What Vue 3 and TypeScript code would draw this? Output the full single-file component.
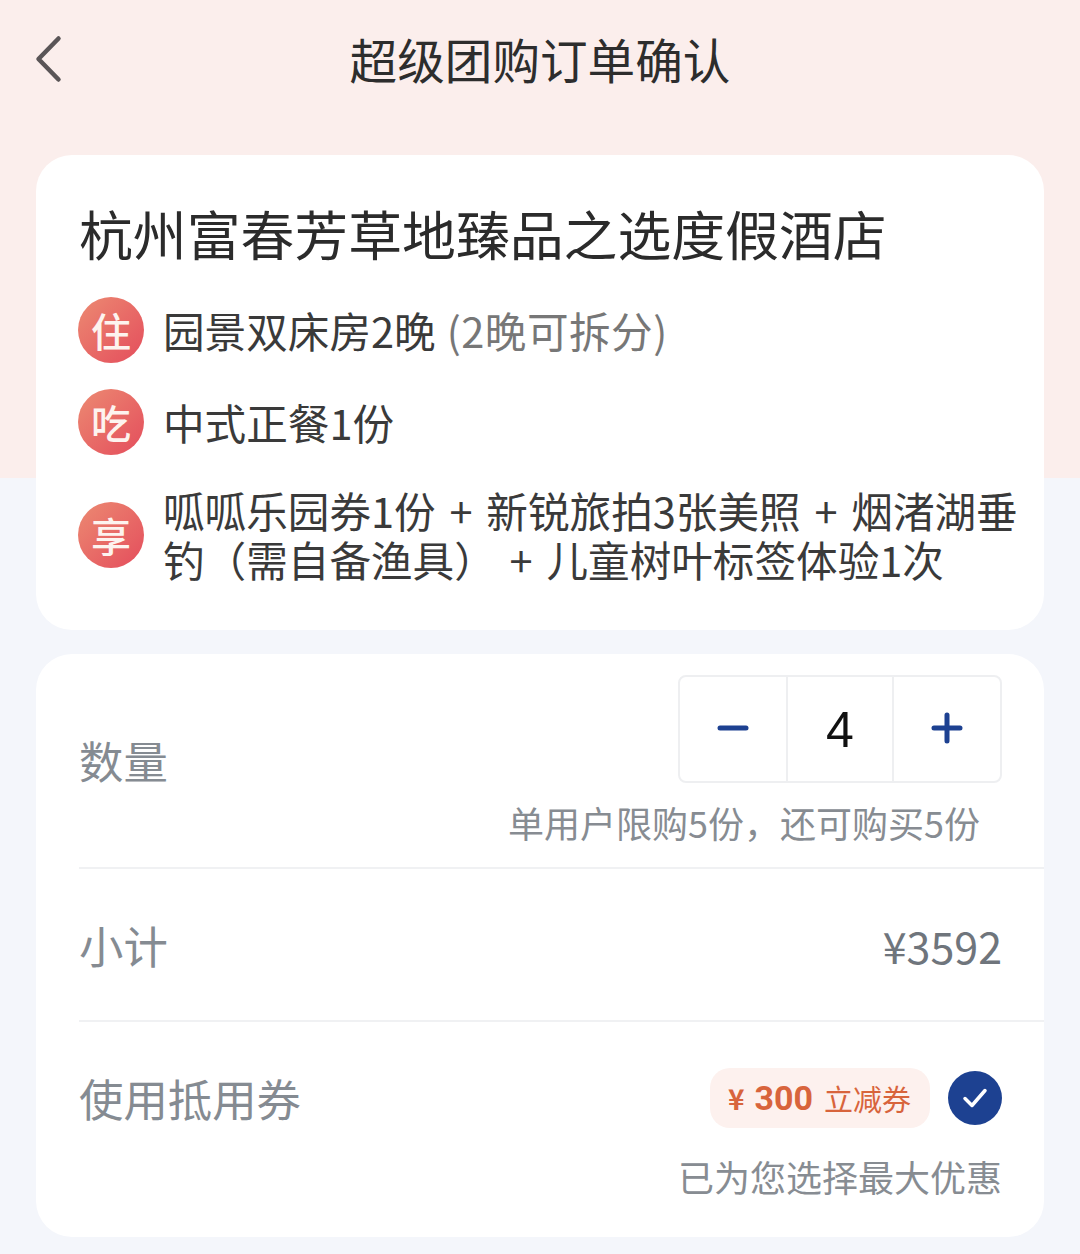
<template>
  <div class="page">
    <div class="page-bg"></div>

    <!-- Header -->
    <header class="nav">
      <svg class="back" width="28" height="48" viewBox="0 0 28 48" aria-label="返回">
        <path d="M24.500 3.500 L4.500 24 L24.500 44.500" fill="none" stroke="#5a5557" stroke-width="4.500" stroke-linecap="round" stroke-linejoin="round" />
      </svg>
      <h1 class="nav-title">超级团购订单确认</h1>
    </header>

    <!-- Hotel card -->
    <section class="card hotel">
      <h2 class="hotel-name">杭州富春芳草地臻品之选度假酒店</h2>
      <div v-for="item in items" :key="item.badge" class="item" :class="item.cls">
        <span class="badge">{{ item.badge }}</span>
        <p class="item-text">{{ item.text }}<span v-if="item.note" class="note">{{ item.note }}</span></p>
      </div>
    </section>

    <!-- Order card -->
    <section class="card order">
      <div class="row row-qty">
        <span class="label">数量</span>
        <div class="qty-col">
          <div class="stepper">
            <button class="step" type="button" aria-label="减少">
              <svg width="32" height="32" viewBox="0 0 32 32"><path d="M3 16H29" stroke="#1d4191" stroke-width="5" stroke-linecap="round" /></svg>
            </button>
            <span class="count">{{ count }}</span>
            <button class="step" type="button" aria-label="增加">
              <svg width="32" height="32" viewBox="0 0 32 32"><path d="M3 16H29M16 3V29" stroke="#1d4191" stroke-width="5" stroke-linecap="round" /></svg>
            </button>
          </div>
          <p class="hint limit">单用户限购5份，还可购买5份</p>
        </div>
      </div>

      <div class="row row-sub">
        <span class="label">小计</span>
        <span class="amount">¥{{ subtotal }}</span>
      </div>

      <div class="row row-coupon">
        <span class="label">使用抵用券</span>
        <div class="coupon-col">
          <div class="coupon-line">
            <div class="coupon">
              <span class="yen">¥</span>
              <span class="value">300</span>
              <span class="kind">立减券</span>
            </div>
            <span class="check">
              <svg width="26" height="24" viewBox="0 0 26 24"><path d="M3 12.500 L10 19.500 L23 4.500" fill="none" stroke="#fff" stroke-width="3.500" stroke-linecap="round" stroke-linejoin="round" /></svg>
            </span>
          </div>
          <p class="hint best">已为您选择最大优惠</p>
        </div>
      </div>
    </section>
  </div>
</template>

<script setup lang="ts">
import { computed, ref } from "vue";

interface PackageItem {
  badge: string;
  text: string;
  note?: string;
  cls: string;
}

const items: PackageItem[] = [
  { badge: "住", text: "园景双床房2晚", note: "(2晚可拆分)", cls: "item-stay" },
  { badge: "吃", text: "中式正餐1份", cls: "item-eat" },
  {
    badge: "享",
    text: "呱呱乐园券1份 + 新锐旅拍3张美照 + 烟渚湖垂钓（需自备渔具） + 儿童树叶标签体验1次",
    cls: "item-enjoy",
  },
];

const count = ref(4);
const subtotal = computed(() => count.value * 898);
</script>

<style>
html,
body {
  margin: 0;
  background: #f4f6fb;
}
</style>

<style scoped>
.page {
  position: relative;
  width: 1080px;
  height: 1254px;
  overflow: hidden;
  box-sizing: border-box;
  padding: 0 36px;
  background: #f4f6fb;
  font-family: "Noto Sans CJK SC", "Noto Sans", sans-serif;
  color: #333;
}

/* pink band behind the top of the first card */
.page-bg {
  position: absolute;
  left: 0;
  top: 0;
  width: 100%;
  height: 478px;
  background: #fbeeec;
}

.nav {
  position: relative;
  height: 155px;
  display: flex;
  justify-content: center;
}

.back {
  position: absolute;
  left: -2px;
  top: 35px;
}

.nav-title {
  margin: 28px 0 0;
  font-size: 47.600px;
  line-height: 62px;
  font-weight: 400;
  color: #2d2d2d;
}

.card {
  position: relative;
  background: #fff;
  border-radius: 36px;
}

/* Hotel card */
.hotel {
  height: 475px;
  box-sizing: border-box;
  padding: 41px 0 0 43px;
}

.hotel-name {
  margin: 0;
  font-size: 53.850px;
  line-height: 74px;
  font-weight: 400;
  white-space: nowrap;
  color: #2b2b2b;
}

.item {
  display: flex;
  align-items: center;
  gap: 19px;
  margin-left: -1px;
}

.item-stay {
  margin-top: 27px;
}

.item-eat {
  margin-top: 26px;
}

.item-enjoy {
  margin-top: 31px;
}

.badge {
  flex: none;
  width: 66px;
  height: 66px;
  border-radius: 50%;
  display: flex;
  align-items: center;
  justify-content: center;
  background: linear-gradient(135deg, #ec8a72, #e44d5c);
  color: #fdf3ef;
  font-size: 40px;
  font-weight: 500;
  line-height: 1;
}

.item-text {
  margin: 0;
  width: 860px;
  font-size: 41.600px;
  line-height: 49px;
  word-spacing: 4.500px;
  color: #3a3a3a;
}

.note {
  margin-left: 11px;
  letter-spacing: 0.500px;
  color: #777;
}

/* Order card */
.order {
  margin-top: 24px;
  height: 583px;
  box-sizing: border-box;
  padding-left: 43px;
}

.row {
  display: flex;
  justify-content: space-between;
  padding-right: 42px;
  border-bottom: 2px solid #f0f1f3;
}

.row-qty {
  height: 215px;
  box-sizing: border-box;
  padding-top: 21px;
}

.row-sub {
  height: 153px;
  box-sizing: border-box;
  align-items: center;
}

.row-coupon {
  border-bottom: 0;
  padding-top: 46px;
}

.label {
  font-size: 44.400px;
  line-height: 60px;
  color: #858b92;
}

.row-qty .label {
  margin-top: 55px;
}

.qty-col,
.coupon-col {
  display: flex;
  flex-direction: column;
  align-items: flex-end;
}

.stepper {
  display: grid;
  grid-template-columns: 106px 108px 1fr;
  width: 324px;
  height: 108px;
  box-sizing: border-box;
  border: 2px solid #eeeff1;
  border-radius: 8px;
}

.step {
  padding: 0 0 3px;
  border: 0;
  background: none;
  display: flex;
  align-items: center;
  justify-content: center;
}

.count {
  border-left: 2px solid #eeeff1;
  border-right: 2px solid #eeeff1;
  text-align: center;
  font-family: "Liberation Sans", sans-serif;
  font-size: 50px;
  line-height: 106px;
  height: 104px;
  color: #111;
}

.hint {
  margin: 0;
  font-size: 36px;
  line-height: 50px;
  color: #878c92;
}

.limit {
  margin: 14px 22px 0 0;
}

.amount {
  font-size: 43px;
  line-height: 60px;
  color: #6f757c;
}

.coupon-line {
  display: flex;
  align-items: center;
  gap: 18px;
}

.coupon {
  display: flex;
  align-items: center;
  width: 220px;
  height: 60px;
  box-sizing: border-box;
  padding-left: 18px;
  background: #fdf1ee;
  border-radius: 20px;
  color: #d8643c;
}

.yen {
  font-size: 28px;
  font-weight: 700;
}

.value {
  margin-left: 10px;
  font-family: Roboto, sans-serif;
  font-size: 34px;
  font-weight: 700;
}

.kind {
  margin-left: 11px;
  font-size: 29px;
}

.check {
  width: 54px;
  height: 54px;
  border-radius: 50%;
  background: #1d4191;
  display: flex;
  align-items: center;
  justify-content: center;
}

.best {
  margin-top: 23px;
}
</style>
